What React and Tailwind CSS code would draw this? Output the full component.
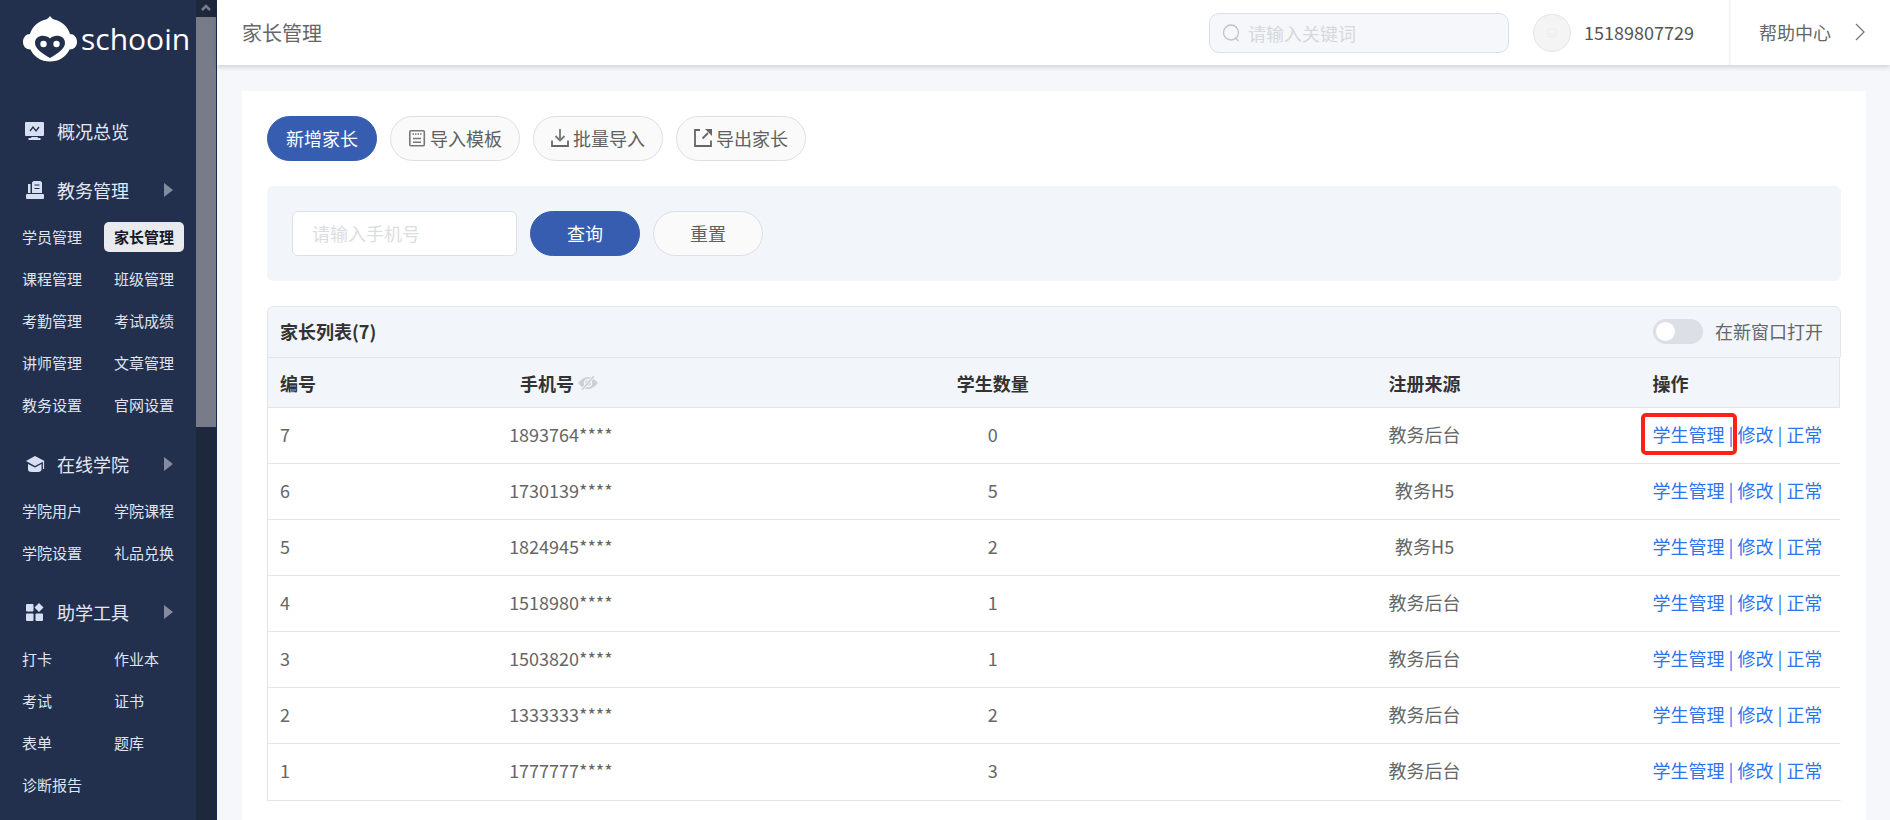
import React, { useState } from 'react';

const menu = [
    { title: '概况总览', icon: 'monitor', items: [] },
    {
        title: '教务管理',
        icon: 'desk',
        items: ['学员管理', '家长管理', '课程管理', '班级管理', '考勤管理', '考试成绩', '讲师管理', '文章管理', '教务设置', '官网设置'],
    },
    { title: '在线学院', icon: 'cap', items: ['学院用户', '学院课程', '学院设置', '礼品兑换'] },
    { title: '助学工具', icon: 'tools', items: ['打卡', '作业本', '考试', '证书', '表单', '题库', '诊断报告'] },
];

const parents = [
    { id: 7, phone: '1893764****', students: 0, source: '教务后台' },
    { id: 6, phone: '1730139****', students: 5, source: '教务H5' },
    { id: 5, phone: '1824945****', students: 2, source: '教务H5' },
    { id: 4, phone: '1518980****', students: 1, source: '教务后台' },
    { id: 3, phone: '1503820****', students: 1, source: '教务后台' },
    { id: 2, phone: '1333333****', students: 2, source: '教务后台' },
    { id: 1, phone: '1777777****', students: 3, source: '教务后台' },
];

const menuIcons = {
    monitor: (
        <>
            <rect x="0" y="0" width="19" height="14" rx="1" fill="#d9dff3" />
            <path d="M5 9l3-4 3 4 3-4" fill="none" stroke="#22304e" strokeWidth="1.300" />
            <path d="M7 14h5l1 2h2.500v2h-12v-2H6z" fill="#d9dff3" />
            <path d="M0 14.500h19" stroke="#22304e" />
        </>
    ),
    desk: (
        <>
            <path d="M3 3h2.500v9H3zM7 1.500L8.500 0h7L17 1.500V12H7z" fill="#d9dff3" />
            <path d="M9.500 4h5M9.500 7.500h5" stroke="#22304e" strokeWidth="1.200" />
            <rect x="1" y="13" width="18" height="5" rx="1" fill="#d9dff3" />
        </>
    ),
    cap: (
        <>
            <path d="M10 1l9.500 5L10 11 1 6z" fill="#d9dff3" />
            <path d="M3 9l7 3.500L16.500 9v6q-1 2-3 2h-7q-3 0-3.500-2z" fill="#d9dff3" />
            <path d="M18.500 6v8" stroke="#d9dff3" strokeWidth="1.200" />
        </>
    ),
    tools: (
        <>
            <rect x="1" y="1" width="7.500" height="7.500" rx="1" fill="#d9dff3" />
            <path d="M14 0l4.500 4.500L14 9 9.500 4.500z" fill="#d9dff3" />
            <rect x="1" y="10.500" width="7.500" height="7.500" rx="1" fill="#d9dff3" />
            <rect x="10.500" y="10.500" width="7.500" height="7.500" rx="1" fill="#d9dff3" />
        </>
    ),
};

const Logo = () => (
    <a href="#" className="flex items-center gap-1 pl-[23px] text-white">
        <svg width="54" height="46" viewBox="0 0 54 46">
            <path
                d="M27 0c1 1.500 2 2.500 4 3.500C39 5 45 11 47 18c4 0 7 3.500 7 8s-3 7.500-7.500 7.500C43 41 36 45.500 27 45.500S11 41 7.500 33.500C3 33.500 0 30.500 0 26s3-8 7-8C9 11 15 5 23 3.500 25 2.500 26 1.500 27 0z"
                fill="#fff"
            />
            <path d="M27 42C20 38 12 33 12 27c0-8.500 11-9 15-4.500C31 18 42 18.500 42 27c0 6-8 11-15 15z" fill="#22304e" />
            <circle cx="20.500" cy="28" r="3.200" fill="#fff" />
            <circle cx="33.500" cy="28" r="3.200" fill="#fff" />
        </svg>
        <span className="font-['Open_Sans',sans-serif] text-[30px] leading-[46px]">schooin</span>
    </a>
);

const Sidebar = () => (
    <aside className="flex w-[217px] shrink-0 overflow-hidden bg-[#22304e]">
        <div className="flex-1 pt-4">
            <Logo />
            <nav className="mt-[54px] flex flex-col gap-[29px]">
                {menu.map(({ title, icon, items }) => (
                    <div key={title}>
                        <a href="#" className="flex h-[30px] items-center pr-[23px] pl-[25px] text-lg text-[#e3e8f5]">
                            <svg className="mr-3" width="20" height="18" viewBox="0 0 20 18">
                                {menuIcons[icon]}
                            </svg>
                            {title}
                            {items.length > 0 && (
                                <svg className="ml-auto" width="9" height="14" viewBox="0 0 9 14">
                                    <path d="M0 0l9 7-9 7z" fill="#848ba0" />
                                </svg>
                            )}
                        </a>
                        {items.length > 0 && (
                            <ul className="mt-[17px] grid grid-cols-[80px_80px] gap-3 pl-3">
                                {items.map((item) => (
                                    <li key={item}>
                                        <a
                                            href="#"
                                            className={
                                                item === '家长管理'
                                                    ? 'block rounded-[5px] bg-[#e9eaed] px-[10px] text-[15px] leading-[30px] font-bold text-[#14192a]'
                                                    : 'block px-[10px] text-[15px] leading-[30px] text-[#dfe4f0]'
                                            }
                                        >
                                            {item}
                                        </a>
                                    </li>
                                ))}
                            </ul>
                        )}
                    </div>
                ))}
            </nav>
        </div>
        {/* scroll track */}
        <div className="flex w-[21px] flex-col border-r border-[#1c2950] bg-[#1e283c]">
            <svg className="h-[17px] w-5" viewBox="0 0 20 17">
                <path d="M6 10l4-4 4 4" fill="none" stroke="#777c88" strokeWidth="2.500" />
            </svg>
            <div className="h-1/2 w-5 bg-[#777c88]" />
        </div>
    </aside>
);

const Header = () => (
    <header className="relative flex h-[65px] shrink-0 items-center bg-white pl-[25px] text-lg text-[#555] shadow-[0_2px_5px_rgba(0,0,0,0.16)]">
        <h1 className="flex-1 text-xl text-[#666]">家长管理</h1>
        <label className="flex h-10 w-[300px] items-center gap-2 rounded-[10px] border border-[#dcdfe8] bg-[#f5f7fb] px-3">
            <svg className="shrink-0" width="18" height="18" viewBox="0 0 18 18" fill="none" stroke="#bfc2c9" strokeWidth="1.300">
                <circle cx="9" cy="8.500" r="7.500" />
                <path d="M13.500 14l3 3" />
            </svg>
            <input
                type="search"
                aria-label="关键词"
                placeholder="请输入关键词"
                className="w-full min-w-0 bg-transparent outline-none placeholder:text-[#d6d8de]"
            />
        </label>
        <span className="ml-6 flex h-[38px] w-[38px] items-center justify-center rounded-full border border-[#e2e4ea] bg-[#f4f4f4]">
            <svg width="10" height="10" viewBox="0 0 10 10" fill="none" stroke="#ececec">
                <rect x="1" y="1" width="8" height="8" rx="1" />
                <path d="M1 8l3-3 2 2 3-3" />
            </svg>
        </span>
        <span className="ml-[13px] w-[145px] pb-0.5">15189807729</span>
        <a href="#" className="flex h-full items-center gap-6 border-l-2 border-[#f3f4f8] pr-[25px] pb-0.5 pl-7 text-[#666]">
            帮助中心
            <svg width="10" height="18" viewBox="0 0 10 18" fill="none" stroke="#777788" strokeWidth="1.300">
                <path d="M1 1l8 8-8 8" />
            </svg>
        </a>
    </header>
);

const TemplateIcon = () => (
    <svg width="18" height="18" viewBox="0 0 18 18" fill="none" stroke="#777" strokeWidth="1.600">
        <rect x="1.800" y="1.800" width="14.500" height="15" rx="1" />
        <path d="M4.500 5h1.500M7 5h1.500M9.500 5H11M12 5h1.500M5 9.500h8M5 13.200h8" />
    </svg>
);

const ImportIcon = () => (
    <svg width="18" height="18" viewBox="0 0 18 18" fill="none" stroke="#777" strokeWidth="1.800">
        <path d="M9 0v11.500M4.500 7L9 11.500 13.500 7" />
        <path d="M1 11.500V17h16v-5.500" stroke="#666" />
    </svg>
);

const ExportIcon = () => (
    <svg width="18" height="18" viewBox="0 0 18 18" fill="none" stroke="#666" strokeWidth="1.800">
        <path d="M6 1H1v16h16v-5.500M8.500 9.500L14 4" />
        <path d="M11 0h7v7z" fill="#666" stroke="none" />
    </svg>
);

const EyeOffIcon = () => (
    <svg width="20" height="14" viewBox="0 0 20 14">
        <path d="M0 7Q10-5 20 7 10 19 0 7z" fill="#cfcfcf" />
        <circle cx="10" cy="7" r="3.500" fill="none" stroke="#f2f5fa" strokeWidth="1.500" />
        <path d="M4 14L16 0" stroke="#f2f5fa" strokeWidth="3" />
        <path d="M4 14L16 0" stroke="#cfcfcf" strokeWidth="1.500" />
    </svg>
);

const buttonBase = 'flex h-[45px] items-center justify-center rounded-full border pb-0.5 text-lg';
const primary = `${buttonBase} w-[110px] border-[#365db0] bg-[#365db0] text-white`;
const plain = `${buttonBase} border-[#dcdfe8] bg-[#fafafa] text-[#606060]`;

const ParentTable = () => {
    const [newWindow, setNewWindow] = useState(false);

    return (
        <section className="mt-[25px] rounded-t-md border border-[#e3e5e9] border-r-transparent">
            <div className="-mr-px rounded-t-md border-r border-[#e3e5e9] bg-[#f2f5fa]">
                <div className="flex h-[50px] items-center pr-[17px] pb-0.5 pl-3 text-lg">
                    <h2 className="flex-1 font-bold text-[#333]">家长列表(7)</h2>
                    <label className="flex items-center gap-3 text-[#666]">
                        <input
                            type="checkbox"
                            role="switch"
                            checked={newWindow}
                            onChange={(e) => setNewWindow(e.target.checked)}
                            className="h-[25px] w-[50px] appearance-none rounded-full bg-[#dcdfe6] p-[3px] before:block before:h-[19px] before:w-[19px] before:rounded-full before:bg-white checked:bg-[#365db0] checked:before:ml-auto"
                        />
                        在新窗口打开
                    </label>
                </div>
            </div>
            <table className="w-full table-fixed text-lg text-[#666]">
                <thead>
                    <tr className="h-[50px] border-y border-[#e3e5e9] bg-[#f2f5fa] text-[#333]">
                        <th className="w-[77px] pl-3 text-left">编号</th>
                        <th>
                            <span className="flex items-center justify-center gap-1 pr-1">
                                手机号
                                <EyeOffIcon />
                            </span>
                        </th>
                        <th>学生数量</th>
                        <th>注册来源</th>
                        <th className="w-[199px] border-r border-[#e3e5e9] pl-3 text-left">操作</th>
                    </tr>
                </thead>
                <tbody>
                    {parents.map((row, i) => (
                        <tr key={row.id} className="h-14 border-b border-[#e3e5e9] last:border-b-0">
                            <td className="pb-[3px] pl-3">{row.id}</td>
                            <td className="pb-[3px] text-center">{row.phone}</td>
                            <td className="pb-[3px] text-center">{row.students}</td>
                            <td className="pb-[3px] text-center">{row.source}</td>
                            <td className="pb-[3px] pl-3 whitespace-nowrap text-[#2a74ee]">
                                <a href="#" className="relative">
                                    学生管理
                                    {i === 0 && (
                                        <span className="absolute -inset-x-3 -inset-y-2 rounded-[5px] border-4 border-[#ff2116]" />
                                    )}
                                </a>
                                {' | '}
                                <a href="#">修改</a>
                                {' | '}
                                <a href="#">正常</a>
                            </td>
                        </tr>
                    ))}
                </tbody>
            </table>
        </section>
    );
};

const App = () => (
    <div className="flex h-screen overflow-hidden bg-[#f5f7fb] font-['Noto_Sans_CJK_SC',sans-serif]">
        <Sidebar />
        <div className="flex min-w-0 flex-1 flex-col">
            <Header />
            <main className="min-h-0 flex-1 overflow-hidden px-6 pt-[26px] pl-[25px]">
                <div className="bg-white p-[25px]">
                    <div className="flex gap-[13px]">
                        <button type="button" className={primary}>新增家长</button>
                        <button type="button" className={`${plain} w-[130px] gap-1`}>
                            <TemplateIcon />
                            导入模板
                        </button>
                        <button type="button" className={`${plain} w-[130px] gap-1`}>
                            <ImportIcon />
                            批量导入
                        </button>
                        <button type="button" className={`${plain} w-[130px] gap-1`}>
                            <ExportIcon />
                            导出家长
                        </button>
                    </div>
                    <form className="mt-[25px] flex gap-[13px] rounded-md bg-[#f2f5fa] p-[25px]">
                        <input
                            type="tel"
                            aria-label="手机号"
                            placeholder="请输入手机号"
                            className="h-[45px] w-[225px] rounded-md border border-[#dcdfe6] bg-white px-[19px] pb-0.5 text-lg outline-none placeholder:text-[#dcdde2]"
                        />
                        <button type="button" className={primary}>查询</button>
                        <button type="reset" className={`${plain} w-[110px]`}>重置</button>
                    </form>
                    <ParentTable />
                </div>
            </main>
        </div>
    </div>
);

export default App;
